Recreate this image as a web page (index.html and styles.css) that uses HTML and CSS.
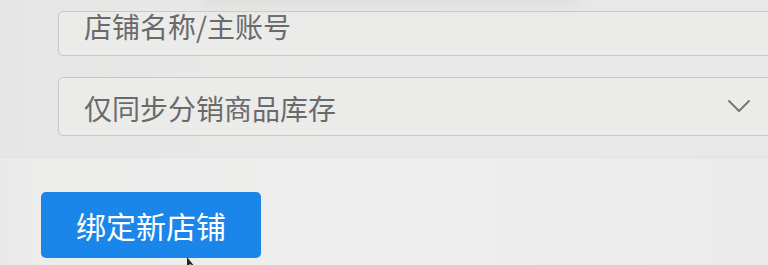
FILE: index.html
```html
<!DOCTYPE html>
<html lang="zh-CN">
<head>
<meta charset="utf-8">
<title>绑定店铺</title>
<link rel="stylesheet" href="styles.css">
</head>
<body>
<div class="page">
  <div class="top-shade"></div>
  <div class="panel">
    <div class="field field-short">
      <span class="placeholder">店铺名称/主账号</span>
    </div>
    <div class="field field-select">
      <span class="placeholder">仅同步分销商品库存</span>
      <svg class="chevron" width="24" height="16" viewBox="0 0 24 16" aria-hidden="true">
        <path d="M2 3 L12 13 L22 3" fill="none" stroke="#777" stroke-width="2" stroke-linecap="round" stroke-linejoin="round"/>
      </svg>
    </div>
  </div>
  <div class="actions">
    <button class="btn-primary" type="button">绑定新店铺</button>
  </div>
  <svg class="cursor" width="14" height="10" viewBox="0 0 14 10" aria-hidden="true">
    <path d="M1 0 L1 10 L4 7 L9 10 Z" fill="#222"/>
  </svg>
</div>
</body>
</html>
```
FILE: styles.css
```css
html, body {
  margin: 0;
  padding: 0;
}
body {
  width: 768px;
  height: 265px;
  overflow: hidden;
  background: #ededec;
  font-family: "Noto Sans CJK SC", "Noto Sans", sans-serif;
}
.page {
  position: relative;
  width: 768px;
  height: 265px;
  overflow: hidden;
  background: linear-gradient(90deg, #e9e9e9 0, #ececeb 40px, #efeeee 400px, #ebebeb 768px);
}
.top-shade {
  position: absolute;
  left: 200px;
  top: -16px;
  width: 380px;
  height: 22px;
  border-radius: 11px;
  background: #d6d6d6;
  filter: blur(8px);
  opacity: 0.6;
}
.panel {
  display: flex;
  flex-direction: column;
  gap: 21px;
  padding: 11px 0 20px 58px;
  background: linear-gradient(90deg, #e6e6e6 0, #e9e9e8 300px, #e8e8e8 768px);
  border-bottom: 2px solid #e4e4e4;
}
.field {
  display: flex;
  align-items: center;
  width: 760px;
  box-sizing: border-box;
  border: 1.5px solid #c8c8c8;
  border-radius: 5px;
  background: #ebebea;
  padding-left: 25px;
  padding-right: 0;
}
.field-short {
  height: 45px;
  padding-bottom: 16px;
}
.field-select {
  height: 59px;
  padding-top: 3px;
  position: relative;
}
.placeholder {
  font-size: 28px;
  color: #6a6a6a;
  line-height: 1;
  letter-spacing: 0;
}
.chevron {
  position: absolute;
  left: 668px;
  top: 20px;
}
.actions {
  display: flex;
  padding: 34px 0 0 41px;
}
.btn-primary {
  width: 220px;
  height: 66px;
  border: none;
  border-radius: 5px;
  background: #1b86ea;
  color: #ffffff;
  font-family: "Noto Sans CJK SC", "Noto Sans", sans-serif;
  font-size: 30px;
  line-height: 1;
  padding: 0;
  display: flex;
  align-items: center;
  justify-content: center;
}
.cursor {
  position: absolute;
  left: 186px;
  top: 257px;
}
```
